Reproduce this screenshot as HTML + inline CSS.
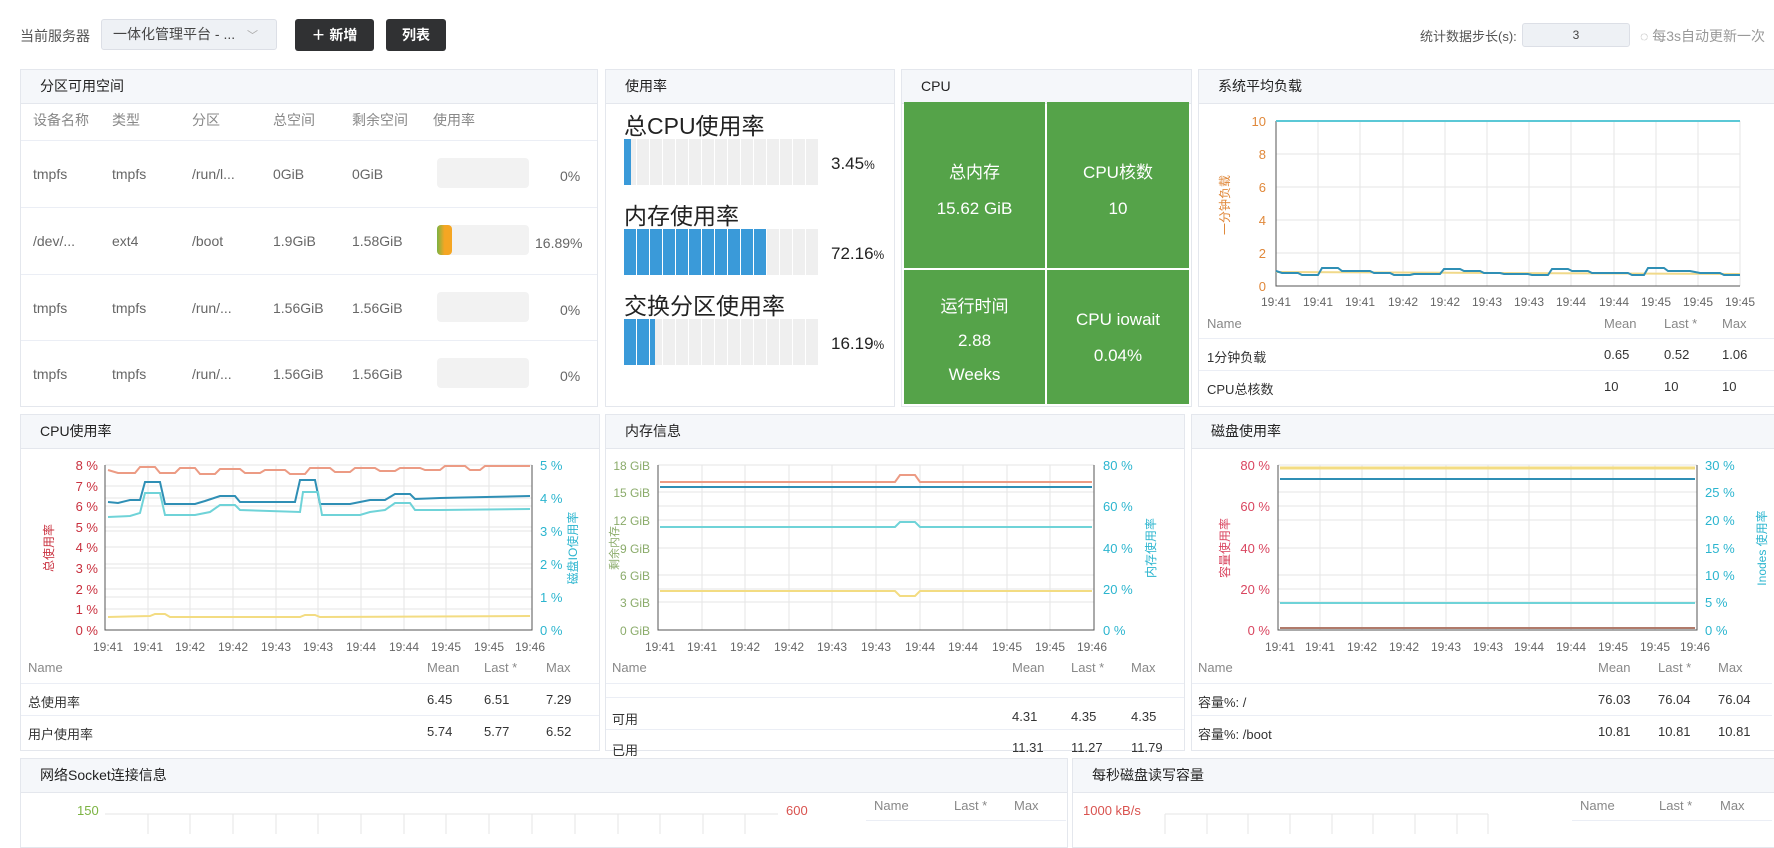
<!DOCTYPE html>
<html><head><meta charset="utf-8">
<style>
*{box-sizing:border-box;margin:0;padding:0}
body{width:1774px;height:834px;overflow:hidden;background:#fff;font-family:"Liberation Sans","Noto Sans CJK SC",sans-serif;color:#333;position:relative}
.a{position:absolute;white-space:nowrap}
.p{position:absolute;border:1px solid #e4e7ed;background:#fff;overflow:hidden}
.p .h{height:34px;background:#f5f7fa;border-bottom:1px solid #e4e7ed;font-size:14px;line-height:33px;padding-left:19px;color:#222}
.btn{position:absolute;background:#303133;color:#fff;border-radius:3px;font-size:14px;text-align:center;font-weight:bold}
.g{color:#666}
.cell{position:absolute;background:#55a349;color:#fff;text-align:center;font-size:17px}
.bar{position:absolute;background:#f2f2f2;border-radius:4px;height:30px}
.tl{position:absolute;font-size:13px;color:#333}
.line{position:absolute;height:1px;background:#ebeef5}
</style></head><body>
<div class="a" style="left:20px;top:26px;font-size:14px;color:#555">当前服务器</div>
<div class="a" style="left:101px;top:19px;width:176px;height:31px;background:#eef1f5;border:1px solid #dcdfe6;border-radius:3px;font-size:14px;line-height:29px;padding-left:11px;color:#444">一体化管理平台 - ... <span style="color:#aaa;font-size:11px;margin-left:8px">﹀</span></div>
<div class="btn" style="left:295px;top:19px;width:79px;height:32px;line-height:32px">＋ 新增</div>
<div class="btn" style="left:386px;top:19px;width:60px;height:32px;line-height:32px">列表</div>
<div class="a" style="left:1420px;top:26px;font-size:13px;color:#555">统计数据步长(s):</div>
<div class="a" style="left:1522px;top:23px;width:108px;height:24px;background:#eef1f5;border:1px solid #dcdfe6;border-radius:3px;font-size:12px;line-height:22px;text-align:center;color:#444">3</div>
<div class="a" style="left:1640px;top:26px;font-size:14px;color:#999">◌ 每3s自动更新一次</div>

<!-- row1 -->
<div class="p" style="left:20px;top:69px;width:578px;height:338px"><div class="h">分区可用空间</div></div>
<div class="a g" style="top:110px;left:33px;font-size:14px;color:#888">设备名称</div>
<div class="a" style="top:110px;left:112px;font-size:14px;color:#888">类型</div>
<div class="a" style="top:110px;left:192px;font-size:14px;color:#888">分区</div>
<div class="a" style="top:110px;left:273px;font-size:14px;color:#888">总空间</div>
<div class="a" style="top:110px;left:352px;font-size:14px;color:#888">剩余空间</div>
<div class="a" style="top:110px;left:433px;font-size:14px;color:#888">使用率</div>
<div class="line" style="left:21px;width:576px;top:140px"></div>
<div class="line" style="left:21px;width:576px;top:207px"></div>
<div class="line" style="left:21px;width:576px;top:274px"></div>
<div class="line" style="left:21px;width:576px;top:340px"></div>

<div class="a g" style="top:166px;left:33px;font-size:14px">tmpfs</div><div class="a g" style="top:166px;left:112px;font-size:14px">tmpfs</div><div class="a g" style="top:166px;left:192px;font-size:14px">/run/l...</div><div class="a g" style="top:166px;left:273px;font-size:14px">0GiB</div><div class="a g" style="top:166px;left:352px;font-size:14px">0GiB</div><div class="bar" style="left:437px;top:158px;width:92px"></div><div class="a g" style="top:168px;left:560px;font-size:14px">0%</div>
<div class="a g" style="top:233px;left:33px;font-size:14px">/dev/...</div><div class="a g" style="top:233px;left:112px;font-size:14px">ext4</div><div class="a g" style="top:233px;left:192px;font-size:14px">/boot</div><div class="a g" style="top:233px;left:273px;font-size:14px">1.9GiB</div><div class="a g" style="top:233px;left:352px;font-size:14px">1.58GiB</div><div class="bar" style="left:437px;top:225px;width:92px"><div style="width:15px;height:30px;border-radius:4px;background:linear-gradient(90deg,#7cb342,#f5a623 50%)"></div></div><div class="a g" style="top:235px;left:535px;font-size:14px">16.89%</div>
<div class="a g" style="top:300px;left:33px;font-size:14px">tmpfs</div><div class="a g" style="top:300px;left:112px;font-size:14px">tmpfs</div><div class="a g" style="top:300px;left:192px;font-size:14px">/run/...</div><div class="a g" style="top:300px;left:273px;font-size:14px">1.56GiB</div><div class="a g" style="top:300px;left:352px;font-size:14px">1.56GiB</div><div class="bar" style="left:437px;top:292px;width:92px"></div><div class="a g" style="top:302px;left:560px;font-size:14px">0%</div>
<div class="a g" style="top:366px;left:33px;font-size:14px">tmpfs</div><div class="a g" style="top:366px;left:112px;font-size:14px">tmpfs</div><div class="a g" style="top:366px;left:192px;font-size:14px">/run/...</div><div class="a g" style="top:366px;left:273px;font-size:14px">1.56GiB</div><div class="a g" style="top:366px;left:352px;font-size:14px">1.56GiB</div><div class="bar" style="left:437px;top:358px;width:92px"></div><div class="a g" style="top:368px;left:560px;font-size:14px">0%</div>

<div class="p" style="left:605px;top:69px;width:290px;height:338px"><div class="h">使用率</div></div>
<div class="a" style="left:624px;top:113px;font-size:23px;line-height:26px;color:#222">总CPU使用率</div>
<div class="a" style="left:624px;top:203px;font-size:23px;line-height:26px;color:#222">内存使用率</div>
<div class="a" style="left:624px;top:293px;font-size:23px;line-height:26px;color:#222">交换分区使用率</div>
<div class="a" style="left:831px;top:154px;font-size:17px;color:#222">3.45<span style="font-size:12px">%</span></div>
<div class="a" style="left:831px;top:244px;font-size:17px;color:#222">72.16<span style="font-size:12px">%</span></div>
<div class="a" style="left:831px;top:334px;font-size:17px;color:#222">16.19<span style="font-size:12px">%</span></div>

<div class="p" style="left:901px;top:69px;width:291px;height:338px"><div class="h">CPU</div></div>
<div class="cell" style="left:904px;top:102px;width:141px;height:166px"><div style="margin-top:56px">总内存</div><div style="margin-top:16px">15.62 GiB</div></div>
<div class="cell" style="left:1047px;top:102px;width:142px;height:166px"><div style="margin-top:56px">CPU核数</div><div style="margin-top:16px">10</div></div>
<div class="cell" style="left:904px;top:270px;width:141px;height:134px"><div style="margin-top:22px">运行时间</div><div style="margin-top:14px">2.88</div><div style="margin-top:14px">Weeks</div></div>
<div class="cell" style="left:1047px;top:270px;width:142px;height:134px"><div style="margin-top:40px">CPU iowait</div><div style="margin-top:16px">0.04%</div></div>

<div class="p" style="left:1198px;top:69px;width:580px;height:338px"><div class="h">系统平均负载</div></div>
<div class="tl" style="left:1207px;top:316px;color:#888">Name</div><div class="tl" style="left:1604px;top:316px;color:#888">Mean</div><div class="tl" style="left:1664px;top:316px;color:#888">Last *</div><div class="tl" style="left:1722px;top:316px;color:#888">Max</div>
<div class="line" style="left:1199px;width:575px;top:338px"></div>
<div class="tl" style="left:1207px;top:347px">1分钟负载</div><div class="tl" style="left:1604px;top:347px">0.65</div><div class="tl" style="left:1664px;top:347px">0.52</div><div class="tl" style="left:1722px;top:347px">1.06</div>
<div class="line" style="left:1199px;width:575px;top:370px"></div>
<div class="tl" style="left:1207px;top:379px">CPU总核数</div><div class="tl" style="left:1604px;top:379px">10</div><div class="tl" style="left:1664px;top:379px">10</div><div class="tl" style="left:1722px;top:379px">10</div>

<!-- row2 -->
<div class="p" style="left:20px;top:414px;width:580px;height:337px"><div class="h">CPU使用率</div></div>
<div class="tl" style="left:28px;top:660px;color:#888">Name</div><div class="tl" style="left:427px;top:660px;color:#888">Mean</div><div class="tl" style="left:484px;top:660px;color:#888">Last *</div><div class="tl" style="left:546px;top:660px;color:#888">Max</div>
<div class="line" style="left:21px;width:578px;top:683px"></div>
<div class="tl" style="left:28px;top:692px">总使用率</div><div class="tl" style="left:427px;top:692px">6.45</div><div class="tl" style="left:484px;top:692px">6.51</div><div class="tl" style="left:546px;top:692px">7.29</div>
<div class="line" style="left:21px;width:578px;top:715px"></div>
<div class="tl" style="left:28px;top:724px">用户使用率</div><div class="tl" style="left:427px;top:724px">5.74</div><div class="tl" style="left:484px;top:724px">5.77</div><div class="tl" style="left:546px;top:724px">6.52</div>

<div class="p" style="left:605px;top:414px;width:580px;height:337px"><div class="h">内存信息</div></div>
<div class="tl" style="left:612px;top:660px;color:#888">Name</div><div class="tl" style="left:1012px;top:660px;color:#888">Mean</div><div class="tl" style="left:1071px;top:660px;color:#888">Last *</div><div class="tl" style="left:1131px;top:660px;color:#888">Max</div>
<div class="line" style="left:606px;width:578px;top:683px"></div>
<div class="tl" style="left:612px;top:709px">可用</div><div class="tl" style="left:1012px;top:709px">4.31</div><div class="tl" style="left:1071px;top:709px">4.35</div><div class="tl" style="left:1131px;top:709px">4.35</div>
<div class="line" style="left:606px;width:578px;top:697px"></div>
<div class="line" style="left:606px;width:578px;top:729px"></div>
<div class="tl" style="left:612px;top:740px">已用</div><div class="tl" style="left:1012px;top:740px">11.31</div><div class="tl" style="left:1071px;top:740px">11.27</div><div class="tl" style="left:1131px;top:740px">11.79</div>

<div class="p" style="left:1191px;top:414px;width:587px;height:337px"><div class="h">磁盘使用率</div></div>
<div class="tl" style="left:1198px;top:660px;color:#888">Name</div><div class="tl" style="left:1598px;top:660px;color:#888">Mean</div><div class="tl" style="left:1658px;top:660px;color:#888">Last *</div><div class="tl" style="left:1718px;top:660px;color:#888">Max</div>
<div class="line" style="left:1192px;width:580px;top:683px"></div>
<div class="tl" style="left:1198px;top:692px">容量%: /</div><div class="tl" style="left:1598px;top:692px">76.03</div><div class="tl" style="left:1658px;top:692px">76.04</div><div class="tl" style="left:1718px;top:692px">76.04</div>
<div class="line" style="left:1192px;width:580px;top:715px"></div>
<div class="tl" style="left:1198px;top:724px">容量%: /boot</div><div class="tl" style="left:1598px;top:724px">10.81</div><div class="tl" style="left:1658px;top:724px">10.81</div><div class="tl" style="left:1718px;top:724px">10.81</div>

<!-- row3 -->
<div class="p" style="left:20px;top:758px;width:1048px;height:90px"><div class="h">网络Socket连接信息</div></div>
<div class="p" style="left:1072px;top:758px;width:706px;height:90px"><div class="h">每秒磁盘读写容量</div></div>
<div class="tl" style="left:77px;top:803px;color:#7cb342">150</div>
<div class="tl" style="left:786px;top:803px;color:#d9534f">600</div>
<div class="tl" style="left:874px;top:798px;color:#888">Name</div><div class="tl" style="left:954px;top:798px;color:#888">Last *</div><div class="tl" style="left:1014px;top:798px;color:#888">Max</div>
<div class="line" style="left:866px;width:200px;top:820px"></div>
<div class="tl" style="left:1083px;top:803px;color:#d9534f">1000 kB/s</div>
<div class="tl" style="left:1580px;top:798px;color:#888">Name</div><div class="tl" style="left:1659px;top:798px;color:#888">Last *</div><div class="tl" style="left:1720px;top:798px;color:#888">Max</div>
<div class="line" style="left:1572px;width:200px;top:820px"></div>

<svg class="a" style="left:0;top:0" width="1774" height="834" font-family="Liberation Sans,Noto Sans CJK SC,sans-serif" font-size="13">
<g stroke="#e6e6e6" stroke-width="1" fill="none">
<path d="M1276 121V286M1318 121V286M1360 121V286M1403 121V286M1445 121V286M1487 121V286M1529 121V286M1571 121V286M1614 121V286M1656 121V286M1698 121V286M1740 121V286M1276 121H1740M1276 154H1740M1276 187H1740M1276 220H1740M1276 253H1740"/>
<path d="M105 465V630M148 465V630M190 465V630M233 465V630M276 465V630M318 465V630M361 465V630M404 465V630M446 465V630M489 465V630M532 465V630M105 465H532M105 486H532M105 506H532M105 527H532M105 547H532M105 568H532M105 589H532M105 609H532M105 498H532M105 531H532M105 564H532M105 597H532"/>
<path d="M658 465V630M702 465V630M745 465V630M789 465V630M832 465V630M876 465V630M920 465V630M963 465V630M1007 465V630M1050 465V630M1094 465V630M658 465H1094M658 492H1094M658 520H1094M658 548H1094M658 575H1094M658 602H1094M658 506H1094M658 589H1094"/>
<path d="M1278 465V630M1320 465V630M1362 465V630M1404 465V630M1446 465V630M1488 465V630M1529 465V630M1571 465V630M1613 465V630M1655 465V630M1697 465V630M1278 465H1697M1278 506H1697M1278 548H1697M1278 589H1697M1278 492H1697M1278 520H1697M1278 575H1697M1278 602H1697"/>
<path d="M105 814H778M148 814V834M190 814V834M233 814V834M276 814V834M318 814V834M361 814V834M404 814V834M446 814V834M489 814V834M532 814V834M575 814V834M618 814V834M660 814V834M703 814V834M745 814V834M1165 814H1488M1165 814V834M1207 814V834M1248 814V834M1290 814V834M1332 814V834M1373 814V834M1415 814V834M1457 814V834M1488 814V834"/>
</g>
<g stroke="#555" stroke-width="1" fill="none"><path d="M1276 121V286H1740M105 465V630H532V465M658 465V630H1094V465M1278 465V630H1697V465"/></g>
<g fill="none" stroke-width="2">
<polyline stroke="#5bc8d6" points="1276,121 1740,121"/>
<polyline stroke="#f0d98a" points="1276,272 1740,274"/>
<polyline stroke="#2f8fb5" points="1276,271 1282,273 1298,273 1302,275 1318,275 1322,268 1338,268 1342,271 1370,271 1374,273 1390,273 1394,275 1410,275 1414,274 1440,274 1444,269 1460,269 1464,271 1480,271 1484,273 1500,273 1504,274 1528,274 1532,275 1548,275 1552,269 1568,269 1572,271 1588,271 1592,273 1628,273 1632,275 1644,275 1648,268 1664,268 1668,271 1690,271 1700,273 1720,273 1724,275 1740,275"/>
<polyline stroke="#ec9b84" points="108,470 118,473 135,473 140,467 155,467 160,473 175,473 180,468 195,468 200,474 215,474 220,469 240,469 245,473 260,473 265,470 285,470 290,474 305,474 310,468 330,468 335,472 350,472 355,468 375,468 380,471 395,471 400,468 420,468 425,470 440,470 445,466 465,466 470,470 480,470 485,466 530,466"/>
<polyline stroke="#2f8fb5" points="108,502 118,503 130,500 140,500 145,482 160,482 165,504 195,504 205,501 220,496 235,496 240,502 295,502 300,480 315,480 320,504 350,504 360,502 370,500 385,500 395,494 410,494 415,499 440,498 530,496"/>
<polyline stroke="#6fd3d8" points="108,517 130,516 140,513 145,493 160,493 165,515 195,515 210,512 220,505 235,505 240,510 300,512 303,492 318,492 322,515 360,515 370,512 385,510 395,503 410,503 415,510 440,510 530,509"/>
<polyline stroke="#f3dc82" points="108,617 150,616 155,614 165,614 170,617 300,617 305,615 315,615 320,617 530,616"/>
<polyline stroke="#ec9b84" points="660,482 895,482 900,475 915,475 920,482 1092,482"/>
<polyline stroke="#2f8fb5" points="660,487 1092,487"/>
<polyline stroke="#6fd3d8" points="660,527 895,527 900,522 915,522 920,527 1092,527"/>
<polyline stroke="#f3dc82" points="660,591 895,591 900,596 915,596 920,591 1092,591"/>
<polyline stroke="#f3dc82" stroke-width="3" points="1280,468 1695,468"/>
<polyline stroke="#2f8fb5" points="1280,479 1695,479"/>
<polyline stroke="#6fd3d8" points="1280,603 1695,603"/>
<polyline stroke="#b07a6a" points="1280,628 1695,628"/>
</g>
<g fill="#e0883a" text-anchor="end"><text x="1266" y="126">10</text><text x="1266" y="159">8</text><text x="1266" y="192">6</text><text x="1266" y="225">4</text><text x="1266" y="258">2</text><text x="1266" y="291">0</text></g>
<text transform="translate(1229,205) rotate(-90)" fill="#e0883a" font-size="12" text-anchor="middle">一分钟负载</text>
<g fill="#666" text-anchor="middle" font-size="12"><text x="1276" y="306">19:41</text><text x="1318" y="306">19:41</text><text x="1360" y="306">19:41</text><text x="1403" y="306">19:42</text><text x="1445" y="306">19:42</text><text x="1487" y="306">19:43</text><text x="1529" y="306">19:43</text><text x="1571" y="306">19:44</text><text x="1614" y="306">19:44</text><text x="1656" y="306">19:45</text><text x="1698" y="306">19:45</text><text x="1740" y="306">19:45</text></g>
<g fill="#c9303e" text-anchor="end"><text x="98" y="470">8 %</text><text x="98" y="491">7 %</text><text x="98" y="511">6 %</text><text x="98" y="532">5 %</text><text x="98" y="552">4 %</text><text x="98" y="573">3 %</text><text x="98" y="594">2 %</text><text x="98" y="614">1 %</text><text x="98" y="635">0 %</text></g>
<g fill="#2bb5cf"><text x="540" y="470">5 %</text><text x="540" y="503">4 %</text><text x="540" y="536">3 %</text><text x="540" y="569">2 %</text><text x="540" y="602">1 %</text><text x="540" y="635">0 %</text></g>
<text transform="translate(53,548) rotate(-90)" fill="#c9303e" font-size="12" text-anchor="middle">总使用率</text>
<text transform="translate(577,548) rotate(-90)" fill="#2bb5cf" font-size="12" text-anchor="middle">磁盘IO使用率</text>
<g fill="#666" text-anchor="middle" font-size="12"><text x="108" y="651">19:41</text><text x="148" y="651">19:41</text><text x="190" y="651">19:42</text><text x="233" y="651">19:42</text><text x="276" y="651">19:43</text><text x="318" y="651">19:43</text><text x="361" y="651">19:44</text><text x="404" y="651">19:44</text><text x="446" y="651">19:45</text><text x="489" y="651">19:45</text><text x="530" y="651">19:46</text></g>
<g fill="#8aab6a" text-anchor="end" font-size="12"><text x="650" y="470">18 GiB</text><text x="650" y="497">15 GiB</text><text x="650" y="525">12 GiB</text><text x="650" y="553">9 GiB</text><text x="650" y="580">6 GiB</text><text x="650" y="607">3 GiB</text><text x="650" y="635">0 GiB</text></g>
<g fill="#2bb5cf"><text x="1103" y="470">80 %</text><text x="1103" y="511">60 %</text><text x="1103" y="553">40 %</text><text x="1103" y="594">20 %</text><text x="1103" y="635">0 %</text></g>
<text transform="translate(618,548) rotate(-90)" fill="#8aab6a" font-size="11" text-anchor="middle">剩余内存</text>
<text transform="translate(1155,548) rotate(-90)" fill="#2bb5cf" font-size="12" text-anchor="middle">内存使用率</text>
<g fill="#666" text-anchor="middle" font-size="12"><text x="660" y="651">19:41</text><text x="702" y="651">19:41</text><text x="745" y="651">19:42</text><text x="789" y="651">19:42</text><text x="832" y="651">19:43</text><text x="876" y="651">19:43</text><text x="920" y="651">19:44</text><text x="963" y="651">19:44</text><text x="1007" y="651">19:45</text><text x="1050" y="651">19:45</text><text x="1092" y="651">19:46</text></g>
<g fill="#d9455f" text-anchor="end"><text x="1270" y="470">80 %</text><text x="1270" y="511">60 %</text><text x="1270" y="553">40 %</text><text x="1270" y="594">20 %</text><text x="1270" y="635">0 %</text></g>
<g fill="#2bb5cf"><text x="1705" y="470">30 %</text><text x="1705" y="497">25 %</text><text x="1705" y="525">20 %</text><text x="1705" y="553">15 %</text><text x="1705" y="580">10 %</text><text x="1705" y="607">5 %</text><text x="1705" y="635">0 %</text></g>
<text transform="translate(1229,548) rotate(-90)" fill="#d9455f" font-size="12" text-anchor="middle">容量使用率</text>
<text transform="translate(1766,548) rotate(-90)" fill="#2bb5cf" font-size="12" text-anchor="middle">Inodes 使用率</text>
<g fill="#666" text-anchor="middle" font-size="12"><text x="1280" y="651">19:41</text><text x="1320" y="651">19:41</text><text x="1362" y="651">19:42</text><text x="1404" y="651">19:42</text><text x="1446" y="651">19:43</text><text x="1488" y="651">19:43</text><text x="1529" y="651">19:44</text><text x="1571" y="651">19:44</text><text x="1613" y="651">19:45</text><text x="1655" y="651">19:45</text><text x="1695" y="651">19:46</text></g>
<g fill="#efefef">
<path d="M624 139h12v46h-12zM637 139h12v46h-12zM650 139h12v46h-12zM663 139h12v46h-12zM676 139h12v46h-12zM689 139h12v46h-12zM702 139h12v46h-12zM715 139h12v46h-12zM728 139h12v46h-12zM741 139h12v46h-12zM754 139h12v46h-12zM767 139h12v46h-12zM780 139h12v46h-12zM793 139h12v46h-12zM806 139h12v46h-12z"/>
<path d="M767 229h12v46h-12zM780 229h12v46h-12zM793 229h12v46h-12zM806 229h12v46h-12z"/>
<path d="M650 319h12v46h-12zM663 319h12v46h-12zM676 319h12v46h-12zM689 319h12v46h-12zM702 319h12v46h-12zM715 319h12v46h-12zM728 319h12v46h-12zM741 319h12v46h-12zM754 319h12v46h-12zM767 319h12v46h-12zM780 319h12v46h-12zM793 319h12v46h-12zM806 319h12v46h-12z"/>
</g>
<g fill="#3a9ad9">
<path d="M624 139h7v46h-7z"/>
<path d="M624 229h12v46h-12zM637 229h12v46h-12zM650 229h12v46h-12zM663 229h12v46h-12zM676 229h12v46h-12zM689 229h12v46h-12zM702 229h12v46h-12zM715 229h12v46h-12zM728 229h12v46h-12zM741 229h12v46h-12zM754 229h12v46h-12z"/>
<path d="M624 319h12v46h-12zM637 319h12v46h-12zM650 319h5v46h-5z"/>
</g>
</svg>
</body></html>
